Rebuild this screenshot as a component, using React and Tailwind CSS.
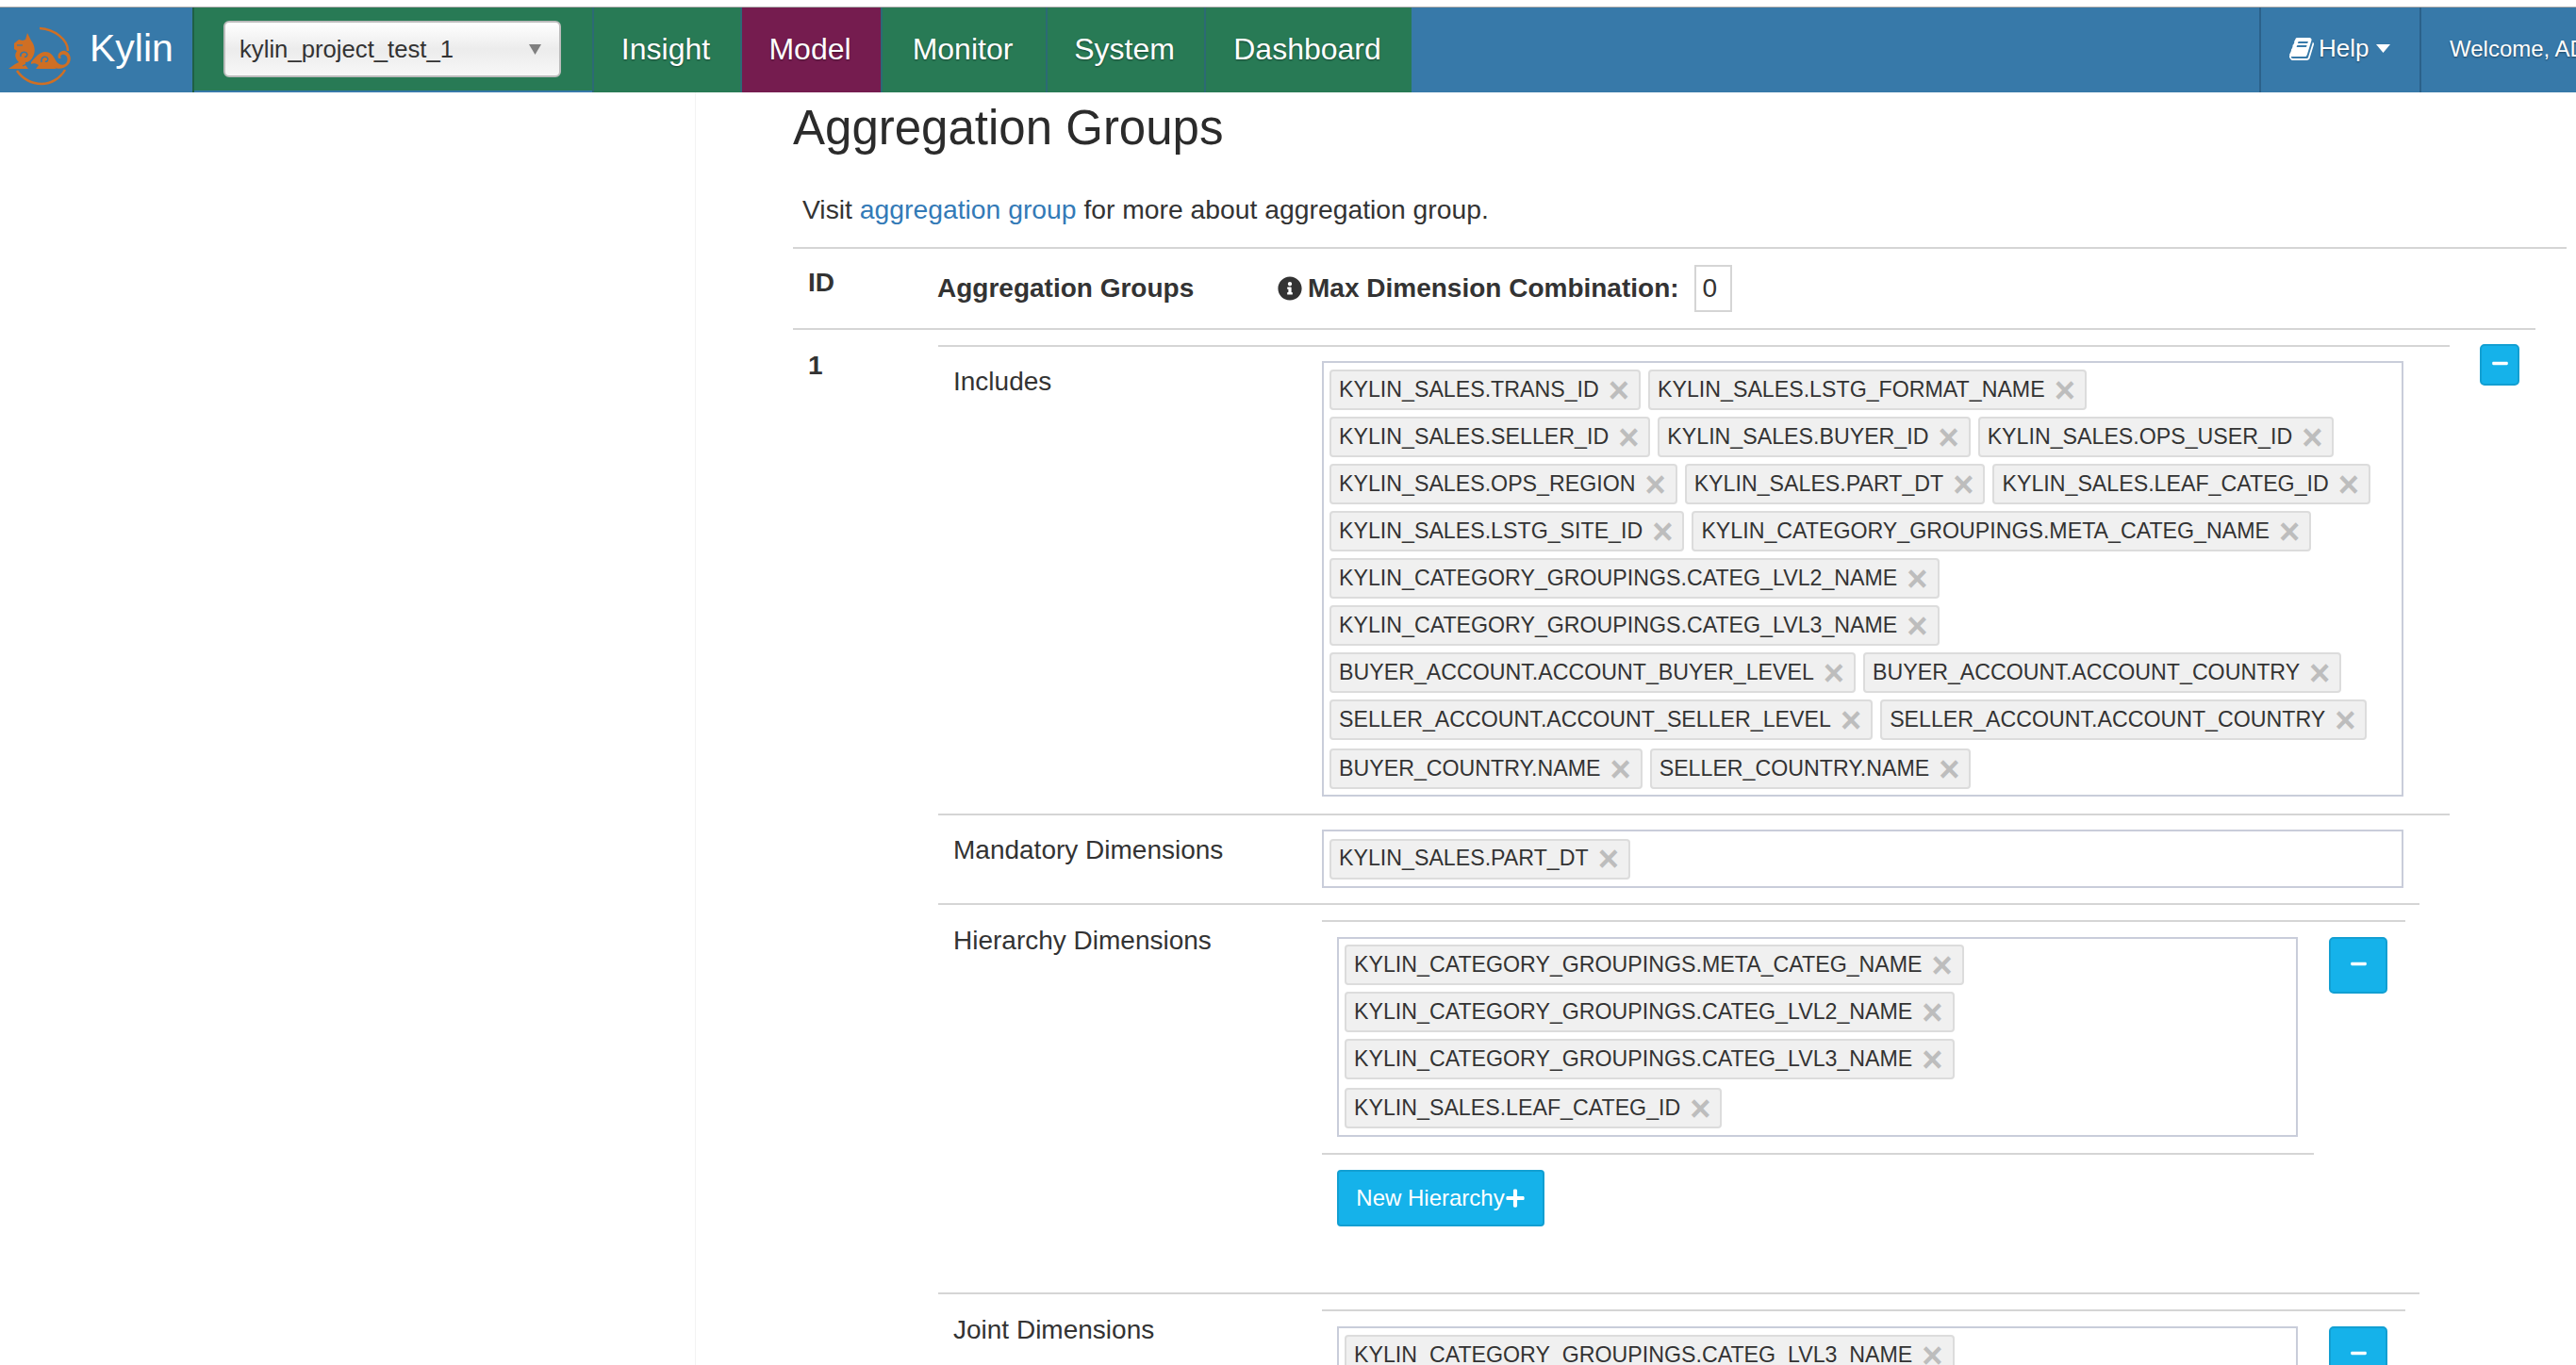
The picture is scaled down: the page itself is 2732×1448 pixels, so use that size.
import { FaInfoCircle, FaMinus, FaPlus } from 'react-icons/fa';

const includes = [
  'KYLIN_SALES.TRANS_ID', 'KYLIN_SALES.LSTG_FORMAT_NAME', 'KYLIN_SALES.SELLER_ID', 'KYLIN_SALES.BUYER_ID',
  'KYLIN_SALES.OPS_USER_ID', 'KYLIN_SALES.OPS_REGION', 'KYLIN_SALES.PART_DT', 'KYLIN_SALES.LEAF_CATEG_ID',
  'KYLIN_SALES.LSTG_SITE_ID', 'KYLIN_CATEGORY_GROUPINGS.META_CATEG_NAME', 'KYLIN_CATEGORY_GROUPINGS.CATEG_LVL2_NAME',
  'KYLIN_CATEGORY_GROUPINGS.CATEG_LVL3_NAME', 'BUYER_ACCOUNT.ACCOUNT_BUYER_LEVEL', 'BUYER_ACCOUNT.ACCOUNT_COUNTRY',
  'SELLER_ACCOUNT.ACCOUNT_SELLER_LEVEL', 'SELLER_ACCOUNT.ACCOUNT_COUNTRY', 'BUYER_COUNTRY.NAME', 'SELLER_COUNTRY.NAME',
];

const hierarchy = [
  'KYLIN_CATEGORY_GROUPINGS.META_CATEG_NAME', 'KYLIN_CATEGORY_GROUPINGS.CATEG_LVL2_NAME',
  'KYLIN_CATEGORY_GROUPINGS.CATEG_LVL3_NAME', 'KYLIN_SALES.LEAF_CATEG_ID',
];

const navItems = [
  { label: 'Insight', width: 'w-[157px]', bg: 'bg-[#287a55]' },
  { label: 'Model', width: 'w-[149px]', bg: 'bg-[#751c4f]' },
  { label: 'Monitor', width: 'w-[175px]', bg: 'bg-[#287a55]' },
  { label: 'System', width: 'w-[168px]', bg: 'bg-[#287a55]' },
  { label: 'Dashboard', width: 'w-[220px]', bg: 'bg-[#287a55]' },
];

const Logo = () => (
  <svg width="80" height="90" viewBox="0 0 80 90" fill="none" className="shrink-0">
    <path d="M42 22C58 23 72 34 72 46" stroke="#cf6f24" strokeWidth="2.5" />
    <path d="M18 67C24 76 34 81 44 81C54 81 64 75 69 66" stroke="#cf6f24" strokeWidth="2.5" />
    <path fill="#cf6f24" d="M15 38L20 34L24 35L27 34L29 27L33 35C37 40 38 47 35 52C33 56 30 58 27 58L27 61L30 65L9 65L16 60L20 58C16 54 15 50 18 46L15 44Z" />
    <path fill="#cf6f24" d="M33 58C38 52 42 47 48 47C54 47 57 52 59 56C61 60 66 62 69 60C73 57 72 51 68 50C65 49 63 52 65 54L62 54C60 49 65 45 69 46C75 48 77 56 72 61C68 65 61 66 57 63L60 65H38L41 61C38 59 35 59 33 60Z" />
    <path d="M44 58C43 53 47 51 50 53C52 55 50 58 48 57" stroke="#3779a9" strokeWidth="1.5" />
    <path d="M22 52C21 48 25 46 28 48C30 50 28 53 26 52" stroke="#3779a9" strokeWidth="1.5" />
    <path d="M18 40L24 40" stroke="#3779a9" strokeWidth="1.2" />
    <path d="M24 62L28 60" stroke="#3779a9" strokeWidth="1.2" />
  </svg>
);

const BookIcon = () => (
  <svg width="28" height="28" viewBox="0 0 1792 1792" fill="white" className="shrink-0">
    <path d="M1639 478q40 57 18 129l-275 906q-19 64-76.5 107.5t-122.5 43.5h-923q-77 0-148.5-53.5t-99.5-131.5q-24-67-2-127 0-4 3-27t4-37q1-8-3-21.5t-3-19.5q2-11 8-21t16.5-23.5 16.5-23.5q23-38 45-91.5t30-91.5q3-10 .5-30t-.5-28q3-11 17-28t17-23q21-36 42-92t25-90q1-9-2.5-32t.5-28q4-13 22-30.5t22-22.5q19-26 42.5-84.5t27.5-96.5q1-8-3-25.5t-2-26.5q2-8 9-18t18-23 17-21q8-12 16.5-30.5t15-35 16-36 19.5-32 26.5-23.5 36-11.5 47.5 5.5l-1 3q38-9 51-9h761q74 0 114 56t18 130l-274 906q-36 119-71.5 153.5t-128.5 34.5h-869q-27 0-38 15-11 16-1 43 24 70 144 70h923q29 0 56-15.5t35-41.5l300-987q7-22 5-57 38 15 59 43zm-1064 2q-4 13 2 22.5t20 9.5h608q13 0 25.5-9.5t16.5-22.5l21-64q4-13-2-22.5t-20-9.5h-608q-13 0-25.5 9.5t-16.5 22.5zm-83 256q-4 13 2 22.5t20 9.5h608q13 0 25.5-9.5t16.5-22.5l21-64q4-13-2-22.5t-20-9.5h-608q-13 0-25.5 9.5t-16.5 22.5z" />
  </svg>
);

const Chip = ({ label, className = '' }) => (
  <span className={`flex h-[43px] items-center rounded-[4px] border-2 border-[#dcdcdc] bg-[#f0f0f0] pl-[8px] pr-[10px] text-[23.2px] leading-none text-[#333] whitespace-nowrap ${className}`}>
    {label}
    <span className="ml-[10px] text-[38px] font-bold leading-none text-[#bdbdbd]">×</span>
  </span>
);

const MinusButton = ({ className = '' }) => (
  <button className={`flex shrink-0 items-center justify-center rounded-[5px] border-2 border-[#129fd2] bg-[#15b2ea] pb-[4px] text-white ${className}`}>
    <FaMinus size={19} />
  </button>
);

const App = () => {
  return (
    <div className="h-[1448px] w-[2732px] overflow-hidden bg-white pt-[7px] font-['Liberation_Sans',Arial,sans-serif] text-[#333]">
      {/* Top bar */}
      <nav className="flex h-[91px] border-t border-[#a9a9a9] bg-[#3779a9] text-white [text-shadow:0_1px_2px_rgba(0,0,0,0.45)]">
        <div className="flex w-[206px] items-start border-r-2 border-[#1f6044]">
          <Logo />
          <span className="ml-[15px] mt-[20px] text-[41px] leading-[46px] [text-shadow:none]">Kylin</span>
        </div>
        <div className="flex h-[88px] w-[422px] items-start bg-[#287a55] pl-[31px] pt-[14px]">
          <div className="flex h-[60px] w-[358px] items-center justify-between rounded-[6px] border-2 border-[#bcbcbc] bg-linear-to-b from-white via-[#ececec] to-[#f7f7f7] pl-[15px] pr-[19px] text-[25.7px] text-[#333] [text-shadow:none]">
            kylin_project_test_1
            <svg width="13" height="11" viewBox="0 0 13 11"><polygon points="0,0 13,0 6.5,11" fill="#808080" /></svg>
          </div>
        </div>
        {navItems.map((item) => (
          <a key={item.label} className={`flex items-center justify-center border-l-2 border-[#2c6a74] pb-[2px] pr-[3px] text-[32px] ${item.width} ${item.bg}`}>
            {item.label}
          </a>
        ))}
        <div className="flex-1" />
        <div className="flex w-[172px] items-center gap-[3px] border-x-2 border-[#2b618a] pb-[3px] pl-[30px] text-[26px]">
          <BookIcon />
          Help
          <svg className="ml-[5px]" width="15" height="9" viewBox="0 0 15 9"><polygon points="0,0 15,0 7.5,9" fill="white" /></svg>
        </div>
        <div className="w-[164px] overflow-hidden whitespace-nowrap pl-[30px] pt-[28px] text-[24px] leading-[32px]">Welcome, ADMIN</div>
      </nav>

      <div className="flex">
        <aside className="h-[1400px] w-[738px] shrink-0 border-r border-[#f3f3f3]" />

        <main className="flex-1 pl-[103px] pr-[10px]">
          <h1 className="mt-[8px] text-[51px] leading-[60px] text-[#2b2b2b]">Aggregation Groups</h1>
          <p className="mb-[20px] ml-[10px] mt-[36px] text-[28.3px] leading-[40px]">
            Visit <a className="text-[#337ab7]">aggregation group</a> for more about aggregation group.
          </p>

          {/* Table head */}
          <div className="flex h-[86px] items-center border-t-2 border-[#d5d5d5] text-[28px] font-bold leading-[32px]">
            <div className="w-[153px] self-start pl-[16px] pt-[20px]">ID</div>
            <div className="w-[361px]">Aggregation Groups</div>
            <FaInfoCircle size={26} className="mr-[6px]" />
            <span>Max Dimension Combination:</span>
            <div className="ml-[16px] flex h-[50px] w-[40px] shrink-0 items-center border-2 border-[#d5d5d5] pl-[7px] font-normal">0</div>
          </div>

          {/* Group 1 */}
          <div className="flex w-[1848px] border-t-2 border-[#d5d5d5]">
            <div className="w-[154px] shrink-0 pl-[16px] pt-[22px] text-[28px] font-bold leading-[32px]">1</div>
            <div className="w-[1603px] shrink-0 pt-[16px]">
              {/* Includes */}
              <div className="flex border-t-2 border-[#d5d5d5] pb-[18px] pt-[15px]">
                <div className="w-[407px] shrink-0 pl-[16px] text-[28px] leading-[43px]">Includes</div>
                <div className="flex w-[1147px] flex-wrap content-start gap-x-[8px] gap-y-[7px] border-2 border-[#c9cdda] pb-[6px] pl-[6px] pt-[7px]">
                  {includes.map((name, i) => (
                    <Chip key={name} label={name} className={i > 15 ? 'mt-[2px]' : ''} />
                  ))}
                </div>
              </div>

              {/* Mandatory */}
              <div className="flex border-t-2 border-[#d5d5d5] pb-[16px] pt-[15px]">
                <div className="w-[407px] shrink-0 pl-[16px] text-[28px] leading-[43px]">Mandatory Dimensions</div>
                <div className="flex h-[62px] w-[1147px] items-center border-2 border-[#c9cdda] pl-[6px]">
                  <Chip label="KYLIN_SALES.PART_DT" />
                </div>
              </div>

              {/* Hierarchy */}
              <div className="flex w-[1571px] border-t-2 border-[#d5d5d5] pt-[16px]">
                <div className="w-[407px] shrink-0 pl-[16px] text-[28px] leading-[43px]">Hierarchy Dimensions</div>
                <div className="w-[1149px] border-t-2 border-[#d5d5d5] pt-[16px]">
                  <div className="flex items-start">
                    <div className="ml-[16px] flex w-[1019px] flex-col items-start gap-[7px] border-2 border-[#c9cdda] pb-[7px] pl-[6px] pt-[6px]">
                      {hierarchy.map((name, i) => (
                        <Chip key={name} label={name} className={i === 3 ? 'mt-[2px]' : ''} />
                      ))}
                    </div>
                    <MinusButton className="ml-[33px] h-[60px] w-[62px]" />
                  </div>
                  <div className="mt-[17px] w-[1052px] border-t-2 border-[#d5d5d5] pl-[16px] pt-[16px]">
                    <button className="flex h-[60px] w-[220px] items-center justify-center rounded-[4px] border-2 border-[#129fd2] bg-[#15b2ea] text-[24px] text-white">
                      New Hierarchy<FaPlus size={22} />
                    </button>
                  </div>
                </div>
              </div>

              {/* Joint */}
              <div className="mt-[70px] flex w-[1571px] border-t-2 border-[#d5d5d5] pt-[16px]">
                <div className="w-[407px] shrink-0 pl-[16px] text-[28px] leading-[43px]">Joint Dimensions</div>
                <div className="w-[1149px] border-t-2 border-[#d5d5d5] pt-[16px]">
                  <div className="flex items-start">
                    <div className="ml-[16px] flex w-[1019px] flex-col items-start gap-[7px] border-2 border-[#c9cdda] pb-[7px] pl-[6px] pt-[7px]">
                      <Chip label="KYLIN_CATEGORY_GROUPINGS.CATEG_LVL3_NAME" />
                    </div>
                    <MinusButton className="ml-[33px] h-[60px] w-[62px]" />
                  </div>
                </div>
              </div>
            </div>
            <div className="pl-[32px] pt-[15px]">
              <MinusButton className="h-[44px] w-[42px]" />
            </div>
          </div>
        </main>
      </div>
    </div>
  );
};

export default App;
